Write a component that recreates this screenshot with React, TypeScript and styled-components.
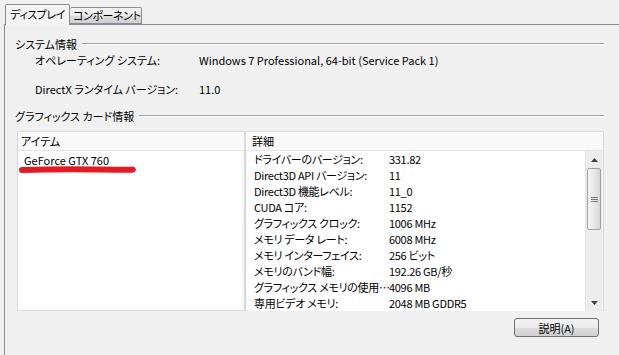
import styled, { createGlobalStyle } from 'styled-components';

const GlobalStyle = createGlobalStyle`
  html, body {
    margin: 0;
    padding: 0;
    background: #f0f0f0;
  }
  body {
    font-family: "Noto Sans CJK JP", "Noto Sans", sans-serif;
    font-size: 11px;
    color: #000;
    font-feature-settings: "palt";
  }
`;

const Window = styled.div`
  width: 619px;
  height: 355px;
  overflow: hidden;
  background: #f0f0f0;
`;

const TabStrip = styled.div`
  display: flex;
  align-items: flex-end;
  height: 24px;
  padding-left: 5px;
  box-sizing: border-box;
`;

const Tab = styled.div<{ $active?: boolean; $w: number }>`
  position: relative;
  z-index: ${(p) => (p.$active ? 2 : 1)};
  width: ${(p) => p.$w}px;
  height: ${(p) => (p.$active ? 21 : 17)}px;
  margin-bottom: ${(p) => (p.$active ? -1 : 0)}px;
  box-sizing: border-box;
  border: 1px solid #898c95;
  border-bottom: ${(p) => (p.$active ? 'none' : '1px solid #898c95')};
  border-left: ${(p) => (p.$active ? '1px solid #898c95' : 'none')};
  border-radius: 2px 2px 0 0;
  background: ${(p) =>
    p.$active
      ? '#f3f3f3'
      : 'linear-gradient(#f2f2f2 0%, #ebebeb 50%, #dddddd 51%, #cfcfcf 100%)'};
  padding-left: ${(p) => (p.$active ? 4 : 3)}px;
  line-height: ${(p) => (p.$active ? 19 : 15)}px;
  letter-spacing: -0.4px;
  white-space: nowrap;
  overflow: hidden;
`;

const Panel = styled.div`
  margin-left: 4px;
  height: 331px;
  box-sizing: border-box;
  border-top: 1px solid #898c95;
  border-left: 1px solid #898c95;
  padding: 11px 15px 0 10px;
`;

const GroupHeader = styled.div`
  display: flex;
  align-items: center;
  gap: 5px;
  height: 16px;
  line-height: 16px;
`;

const GroupLine = styled.div`
  flex: 1;
  height: 0;
  border-top: 1px solid #a0a0a0;
  border-bottom: 1px solid #ffffff;
`;

const InfoGrid = styled.div`
  display: grid;
  grid-template-columns: 164px 1fr;
  row-gap: 13px;
  padding-left: 20px;
  margin-bottom: 11px;
  line-height: 16px;
  white-space: nowrap;
`;

const Lists = styled.div`
  display: flex;
  height: 180px;
  margin: 7px 0 0 2px;
`;

const ListBox = styled.div<{ $w?: number }>`
  display: flex;
  flex-direction: column;
  ${(p) => (p.$w ? `width: ${p.$w}px;` : 'flex: 1;')}
  box-sizing: border-box;
  border: 1px solid #dadada;
  background: #f6f6f6;
`;

const ListHeader = styled.div<{ $pad: number }>`
  height: 18px;
  line-height: 18px;
  padding-left: ${(p) => p.$pad}px;
  border-bottom: 1px solid #e6e6e6;
  background: #f9f9f9;
`;

const ItemBody = styled.div`
  position: relative;
  flex: 1;
  margin-right: 2px;
  background: #fff;
  padding: 1px 0 0 6px;
  line-height: 16px;
`;

const Mark = styled.svg`
  position: absolute;
  left: 0;
  top: 14px;
`;

const DetailBody = styled.div`
  flex: 1;
  display: flex;
  margin-left: 1px;
`;

const Rows = styled.div`
  flex: 1;
  background: #fff;
  padding-left: 7px;
`;

const Row = styled.div`
  display: grid;
  grid-template-columns: 135px 1fr;
  height: 16px;
  line-height: 16px;
  white-space: nowrap;
`;

const Cell = styled.span`
  overflow: hidden;
  letter-spacing: -0.3px;
`;

const ScrollBar = styled.div`
  display: flex;
  flex-direction: column;
  width: 16px;
  margin-right: 1px;
  background: #ececec;
  border-left: 1px solid #e2e2e2;
`;

const Arrow = styled.div`
  height: 17px;
  display: flex;
  align-items: center;
  justify-content: center;
`;

const Thumb = styled.div`
  height: 62px;
  margin: 0 1px;
  box-sizing: border-box;
  border: 1px solid #a0a0a0;
  border-radius: 2px;
  background: linear-gradient(90deg, #f4f4f4 0%, #e8e8e8 50%, #d6d6d6 100%);
  display: flex;
  align-items: center;
  justify-content: center;
`;

const Track = styled.div`
  flex: 1;
`;

const ButtonRow = styled.div`
  display: flex;
  justify-content: flex-end;
  padding-right: 5px;
  margin-top: 7px;
`;

const Button = styled.button`
  width: 85px;
  height: 19px;
  padding: 0;
  box-sizing: border-box;
  border: 1px solid #707070;
  border-radius: 3px;
  background: linear-gradient(#f2f2f2 0%, #ebebeb 50%, #dddddd 51%, #cfcfcf 100%);
  font: inherit;
  line-height: 16px;
  color: #000;
`;

const details: [string, string][] = [
  ['ドライバーのバージョン:', '331.82'],
  ['Direct3D API バージョン:', '11'],
  ['Direct3D 機能レベル:', '11_0'],
  ['CUDA コア:', '1152'],
  ['グラフィックス クロック:', '1006 MHz'],
  ['メモリ データ レート:', '6008 MHz'],
  ['メモリ インターフェイス:', '256 ビット'],
  ['メモリのバンド幅:', '192.26 GB/秒'],
  ['グラフィックス メモリの使用…', '4096 MB'],
  ['専用ビデオ メモリ:', '2048 MB GDDR5'],
];

export default function App() {
  return (
    <Window>
      <GlobalStyle />
      <TabStrip>
        <Tab $active $w={65}>ディスプレイ</Tab>
        <Tab $w={72}>コンポーネント</Tab>
      </TabStrip>
      <Panel>
        <GroupHeader>
          <span>システム情報</span>
          <GroupLine />
        </GroupHeader>
        <InfoGrid>
          <span>オペレーティング システム:</span>
          <span>Windows 7 Professional, 64-bit (Service Pack 1)</span>
          <span>DirectX ランタイム バージョン:</span>
          <span>11.0</span>
        </InfoGrid>
        <GroupHeader>
          <span>グラフィックス カード情報</span>
          <GroupLine />
        </GroupHeader>
        <Lists>
          <ListBox $w={228}>
            <ListHeader $pad={3}>アイテム</ListHeader>
            <ItemBody>
              GeForce GTX 760
              <Mark width="118" height="10" viewBox="0 0 118 10">
                <path
                  d="M4 5 Q40 4 80 4.5 T114 4.5"
                  stroke="#e41b25"
                  strokeWidth="6"
                  strokeLinecap="round"
                  fill="none"
                />
              </Mark>
            </ItemBody>
          </ListBox>
          <ListBox>
            <ListHeader $pad={6}>詳細</ListHeader>
            <DetailBody>
              <Rows>
                {details.map(([k, v]) => (
                  <Row key={k}>
                    <Cell>{k}</Cell>
                    <Cell>{v}</Cell>
                  </Row>
                ))}
              </Rows>
              <ScrollBar>
                <Arrow>
                  <svg width="7" height="4" viewBox="0 0 7 4">
                    <path d="M0 4 L3.5 0 L7 4 Z" fill="#404040" />
                  </svg>
                </Arrow>
                <Thumb>
                  <svg width="7" height="7" viewBox="0 0 7 7">
                    <path d="M0 1.5 H7 M0 3.5 H7 M0 5.5 H7" stroke="#7a7a7a" strokeWidth="1" />
                  </svg>
                </Thumb>
                <Track />
                <Arrow>
                  <svg width="7" height="4" viewBox="0 0 7 4">
                    <path d="M0 0 L7 0 L3.5 4 Z" fill="#404040" />
                  </svg>
                </Arrow>
              </ScrollBar>
            </DetailBody>
          </ListBox>
        </Lists>
        <ButtonRow>
          <Button>説明(A)</Button>
        </ButtonRow>
      </Panel>
    </Window>
  );
}
